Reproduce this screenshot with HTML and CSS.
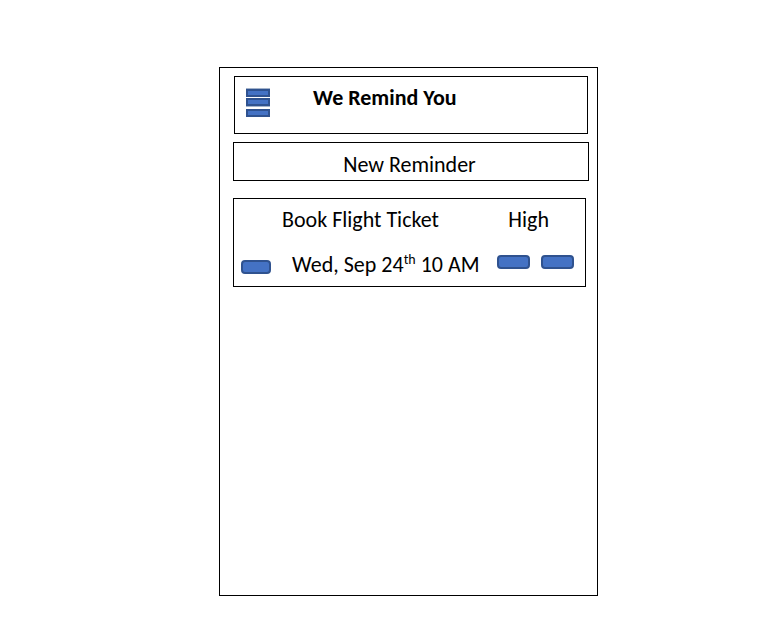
FILE: index.html
```html
<!DOCTYPE html>
<html lang="en">
<head>
<meta charset="utf-8">
<meta name="viewport" content="width=device-width, initial-scale=1">
<title>We Remind You</title>
<link rel="stylesheet" href="styles.css">
</head>
<body>
<main class="phone">
  <header class="header">
    <button class="menu" type="button" aria-label="Menu">
      <svg class="menu-icon" viewBox="0 0 24 29" width="24" height="29" aria-hidden="true">
        <path fill="#a3b3cb" d="M0 0h24v1H0zM0 18h24v1H0z"/>
        <path fill="#2f528f" d="M0 1h24v8H0zM0 10h24v8H0zM0 21h24v8H0z"/>
        <path fill="#4472c4" d="M2 3h20v4H2zM2 12h20v4H2zM2 23h20v4H2z"/>
      </svg>
    </button>
    <h1 class="title">We Remind You</h1>
  </header>
  <button class="new" type="button">New Reminder</button>
  <article class="card">
    <div class="row">
      <h2 class="name">Book Flight Ticket</h2>
      <span class="priority">High</span>
    </div>
    <div class="row">
      <button class="chip chip-small" type="button" aria-label="Complete"></button>
      <time class="when">Wed, Sep 24<sup>th</sup> 10 AM</time>
      <div class="actions">
        <button class="chip" type="button" aria-label="Edit"></button>
        <button class="chip" type="button" aria-label="Delete"></button>
      </div>
    </div>
  </article>
</main>
</body>
</html>
```
FILE: styles.css
```css
* { box-sizing: border-box; }
body {
  margin: 0;
  min-height: 100vh;
  padding: 67px 170px 22px 219px;
  display: flex;
  background: #fff;
  color: #000;
  font: 22px/26px Carlito, Lato, sans-serif;
}
.phone {
  flex: 1;
  border: 1px solid #000;
  padding: 8px 8px 8px 13px;
}
button { font: inherit; color: inherit; padding: 0; }
.header {
  display: flex;
  align-items: flex-start;
  min-height: 58px;
  margin: 0 1px;
  padding: 8px 11px;
  border: 1px solid #000;
}
.menu {
  margin-top: 3px;
  border: 0;
  background: none;
}
.menu-icon { display: block; }
.title { margin: 0 0 0 43px; font-size: 22px; font-weight: 700; }
.new {
  display: block;
  width: 100%;
  min-height: 39px;
  margin: 8px 0 17px;
  padding: 6px 3px 0 0;
  border: 1px solid #000;
  background: #fff;
}
.card {
  min-height: 89px;
  margin-right: 3px;
  padding: 8px 11px 0 7px;
  border: 1px solid #000;
}
.row { display: flex; align-items: flex-start; min-height: 45px; }
.row + .row { min-height: 34px; }
.name { margin: 0 0 0 41px; font-size: 22px; font-weight: 400; }
.priority { margin: 0 25px 0 auto; }
.chip {
  width: 33px;
  height: 14px;
  border: 2px solid #2f528f;
  border-radius: 4px;
  background: #4472c4;
}
.chip-small { width: 30px; margin-top: 8px; }
.when { margin-left: 21px; }
.when sup { font-size: 14px; line-height: 0; }
.actions { display: flex; gap: 11px; margin: 3px 0 0 auto; }
```
